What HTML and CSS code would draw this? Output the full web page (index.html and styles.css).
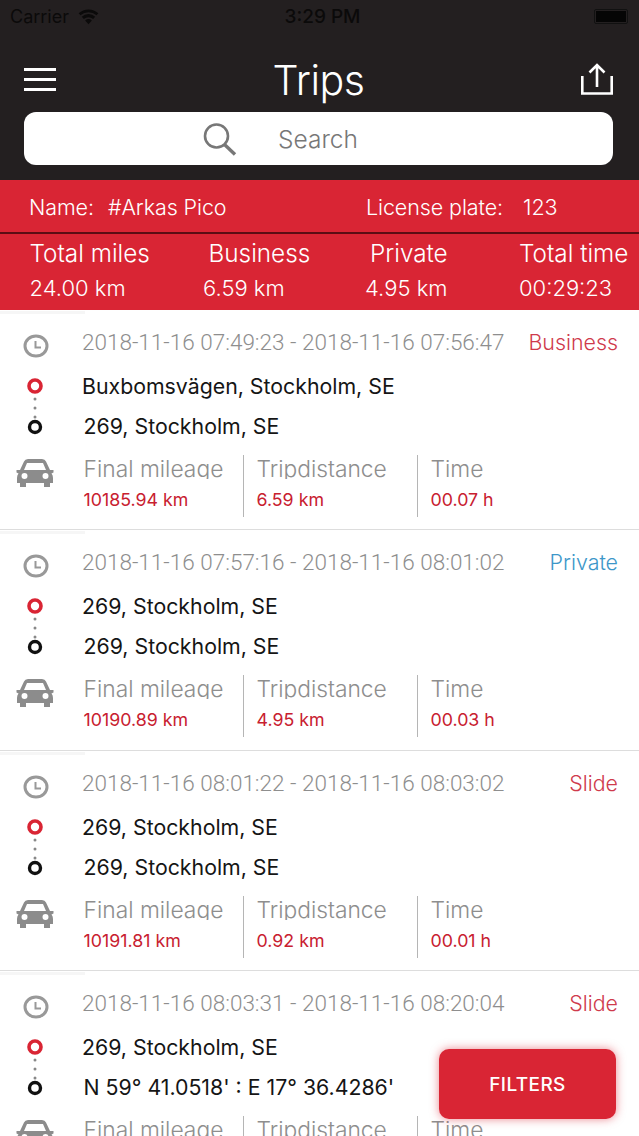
FILE: index.html
```html
<!DOCTYPE html>
<html lang="en">
<head>
  <meta charset="UTF-8" />
  <title>Trips</title>
  <link rel="stylesheet" href="styles.css">
</head>
<body>
  <header class="top">
    <div class="status-bar">
      <div class="carrier">
        Carrier
        <svg class="wifi" viewBox="0 0 20 15" width="21" height="16"><path d="M10 14.500 6.800 10.800A5 5 0 0 1 13.200 10.800ZM5.600 9.400 3.600 7.200A9.600 9.600 0 0 1 16.400 7.200L14.400 9.400A6.800 6.800 0 0 0 5.600 9.400ZM2.400 5.900 .6 3.900A14 14 0 0 1 19.400 3.900L17.600 5.900A11.400 11.400 0 0 0 2.400 5.900Z" fill="#0b0a0a"/></svg>
      </div>
      <div class="clock-text">3:29 PM</div>
      <div class="battery"><span></span></div>
    </div>
    <div class="nav-row">
      <svg class="menu-icon" viewBox="0 0 32 23" width="32" height="23"><path d="M0 1.500h32M0 11.500h32M0 21.500h32" stroke="#fff" stroke-width="3"/></svg>
      <h1>Trips</h1>
      <svg class="share-icon" viewBox="0 0 32 32" width="32" height="32"><path d="M1.300 13v17.500h29.400V13" fill="none" stroke="#fff" stroke-width="2.600"/><path d="M16 24V2M8.500 9.500 16 2l7.500 7.500" fill="none" stroke="#fff" stroke-width="2.600"/></svg>
    </div>
    <div class="search-box">
      <svg viewBox="0 0 36 34" width="36" height="34"><circle cx="14.500" cy="14" r="11.500" fill="none" stroke="#777" stroke-width="2.600"/><path d="M22.500 22.500 33 32.500" stroke="#777" stroke-width="3.400"/></svg>
      <span>Search</span>
    </div>
  </header>

  <section class="summary">
    <div class="vehicle-row">
      <div class="vehicle-name"><span>Name:</span><span>#Arkas Pico</span></div>
      <div class="vehicle-plate"><span>License plate:</span><span>123</span></div>
    </div>
    <div class="totals-row">
      <div class="total total-miles"><p>Total miles</p><p>24.00 km</p></div>
      <div class="total total-business"><p>Business</p><p>6.59 km</p></div>
      <div class="total total-private"><p>Private</p><p>4.95 km</p></div>
      <div class="total total-time"><p>Total time</p><p>00:29:23</p></div>
    </div>
  </section>

  <main class="trip-list">

    <div class="trip-card">
      <div class="icon-col">
        <svg class="clock-icon" viewBox="0 0 26 24" width="26" height="24"><ellipse cx="13" cy="12" rx="11" ry="10" fill="none" stroke="#999" stroke-width="3"/><path d="M12.500 7v6.500h5.500" fill="none" stroke="#999" stroke-width="2"/></svg>
        <svg class="route-icon" viewBox="0 0 18 62" width="18" height="62"><circle cx="9" cy="8" r="6" fill="none" stroke="#d92534" stroke-width="3.600"/><circle cx="9" cy="21" r="1.500" fill="#888"/><circle cx="9" cy="30" r="1.500" fill="#888"/><circle cx="9" cy="39" r="1.500" fill="#888"/><circle cx="9" cy="49" r="5.500" fill="none" stroke="#111" stroke-width="3.400"/></svg>
        <svg class="car-icon" viewBox="0 0 38 30" width="38" height="30"><path d="M4 12 8 3.500Q9 1 12 1H26Q29 1 30 3.500L34 12H37.500V14.500L35.500 15.500Q37 17 37 20V25H34V29H28V25H10V29H4V25H1V20Q1 17 2.500 15.500L.5 14.500V12ZM8 12H30L27 5H11ZM8.500 21a3 3 0 1 0 0-6a3 3 0 1 0 0 6ZM29.500 21a3 3 0 1 0 0-6a3 3 0 1 0 0 6Z" fill="#8c8c8c" fill-rule="evenodd"/></svg>
      </div>
      <div class="trip-body">
        <div class="date-row"><span class="dates">2018-11-16 07:49:23 - 2018-11-16 07:56:47</span><span class="tag tag-red">Business</span></div>
        <p class="address">Buxbomsvägen, Stockholm, SE</p>
        <p class="address address-to">269, Stockholm, SE</p>
        <div class="metrics">
          <div class="metric"><p class="metric-label">Final mileage</p><p class="metric-value">10185.94 km</p></div>
          <div class="metric"><p class="metric-label">Tripdistance</p><p class="metric-value">6.59 km</p></div>
          <div class="metric"><p class="metric-label">Time</p><p class="metric-value">00.07 h</p></div>
        </div>
      </div>
    </div>

    <div class="trip-card">
      <div class="icon-col">
        <svg class="clock-icon" viewBox="0 0 26 24" width="26" height="24"><ellipse cx="13" cy="12" rx="11" ry="10" fill="none" stroke="#999" stroke-width="3"/><path d="M12.500 7v6.500h5.500" fill="none" stroke="#999" stroke-width="2"/></svg>
        <svg class="route-icon" viewBox="0 0 18 62" width="18" height="62"><circle cx="9" cy="8" r="6" fill="none" stroke="#d92534" stroke-width="3.600"/><circle cx="9" cy="21" r="1.500" fill="#888"/><circle cx="9" cy="30" r="1.500" fill="#888"/><circle cx="9" cy="39" r="1.500" fill="#888"/><circle cx="9" cy="49" r="5.500" fill="none" stroke="#111" stroke-width="3.400"/></svg>
        <svg class="car-icon" viewBox="0 0 38 30" width="38" height="30"><path d="M4 12 8 3.500Q9 1 12 1H26Q29 1 30 3.500L34 12H37.500V14.500L35.500 15.500Q37 17 37 20V25H34V29H28V25H10V29H4V25H1V20Q1 17 2.500 15.500L.5 14.500V12ZM8 12H30L27 5H11ZM8.500 21a3 3 0 1 0 0-6a3 3 0 1 0 0 6ZM29.500 21a3 3 0 1 0 0-6a3 3 0 1 0 0 6Z" fill="#8c8c8c" fill-rule="evenodd"/></svg>
      </div>
      <div class="trip-body">
        <div class="date-row"><span class="dates">2018-11-16 07:57:16 - 2018-11-16 08:01:02</span><span class="tag tag-blue">Private</span></div>
        <p class="address">269, Stockholm, SE</p>
        <p class="address address-to">269, Stockholm, SE</p>
        <div class="metrics">
          <div class="metric"><p class="metric-label">Final mileage</p><p class="metric-value">10190.89 km</p></div>
          <div class="metric"><p class="metric-label">Tripdistance</p><p class="metric-value">4.95 km</p></div>
          <div class="metric"><p class="metric-label">Time</p><p class="metric-value">00.03 h</p></div>
        </div>
      </div>
    </div>

    <div class="trip-card">
      <div class="icon-col">
        <svg class="clock-icon" viewBox="0 0 26 24" width="26" height="24"><ellipse cx="13" cy="12" rx="11" ry="10" fill="none" stroke="#999" stroke-width="3"/><path d="M12.500 7v6.500h5.500" fill="none" stroke="#999" stroke-width="2"/></svg>
        <svg class="route-icon" viewBox="0 0 18 62" width="18" height="62"><circle cx="9" cy="8" r="6" fill="none" stroke="#d92534" stroke-width="3.600"/><circle cx="9" cy="21" r="1.500" fill="#888"/><circle cx="9" cy="30" r="1.500" fill="#888"/><circle cx="9" cy="39" r="1.500" fill="#888"/><circle cx="9" cy="49" r="5.500" fill="none" stroke="#111" stroke-width="3.400"/></svg>
        <svg class="car-icon" viewBox="0 0 38 30" width="38" height="30"><path d="M4 12 8 3.500Q9 1 12 1H26Q29 1 30 3.500L34 12H37.500V14.500L35.500 15.500Q37 17 37 20V25H34V29H28V25H10V29H4V25H1V20Q1 17 2.500 15.500L.5 14.500V12ZM8 12H30L27 5H11ZM8.500 21a3 3 0 1 0 0-6a3 3 0 1 0 0 6ZM29.500 21a3 3 0 1 0 0-6a3 3 0 1 0 0 6Z" fill="#8c8c8c" fill-rule="evenodd"/></svg>
      </div>
      <div class="trip-body">
        <div class="date-row"><span class="dates">2018-11-16 08:01:22 - 2018-11-16 08:03:02</span><span class="tag tag-red">Slide</span></div>
        <p class="address">269, Stockholm, SE</p>
        <p class="address address-to">269, Stockholm, SE</p>
        <div class="metrics">
          <div class="metric"><p class="metric-label">Final mileage</p><p class="metric-value">10191.81 km</p></div>
          <div class="metric"><p class="metric-label">Tripdistance</p><p class="metric-value">0.92 km</p></div>
          <div class="metric"><p class="metric-label">Time</p><p class="metric-value">00.01 h</p></div>
        </div>
      </div>
    </div>

    <div class="trip-card">
      <div class="icon-col">
        <svg class="clock-icon" viewBox="0 0 26 24" width="26" height="24"><ellipse cx="13" cy="12" rx="11" ry="10" fill="none" stroke="#999" stroke-width="3"/><path d="M12.500 7v6.500h5.500" fill="none" stroke="#999" stroke-width="2"/></svg>
        <svg class="route-icon" viewBox="0 0 18 62" width="18" height="62"><circle cx="9" cy="8" r="6" fill="none" stroke="#d92534" stroke-width="3.600"/><circle cx="9" cy="21" r="1.500" fill="#888"/><circle cx="9" cy="30" r="1.500" fill="#888"/><circle cx="9" cy="39" r="1.500" fill="#888"/><circle cx="9" cy="49" r="5.500" fill="none" stroke="#111" stroke-width="3.400"/></svg>
        <svg class="car-icon" viewBox="0 0 38 30" width="38" height="30"><path d="M4 12 8 3.500Q9 1 12 1H26Q29 1 30 3.500L34 12H37.500V14.500L35.500 15.500Q37 17 37 20V25H34V29H28V25H10V29H4V25H1V20Q1 17 2.500 15.500L.5 14.500V12ZM8 12H30L27 5H11ZM8.500 21a3 3 0 1 0 0-6a3 3 0 1 0 0 6ZM29.500 21a3 3 0 1 0 0-6a3 3 0 1 0 0 6Z" fill="#8c8c8c" fill-rule="evenodd"/></svg>
      </div>
      <div class="trip-body">
        <div class="date-row"><span class="dates">2018-11-16 08:03:31 - 2018-11-16 08:20:04</span><span class="tag tag-red">Slide</span></div>
        <p class="address">269, Stockholm, SE</p>
        <p class="address address-to">N 59° 41.0518' : E 17° 36.4286'</p>
        <div class="metrics">
          <div class="metric"><p class="metric-label">Final mileage</p></div>
          <div class="metric"><p class="metric-label">Tripdistance</p></div>
          <div class="metric"><p class="metric-label">Time</p></div>
        </div>
      </div>
    </div>

  </main>

  <button class="filters-btn">FILTERS</button>
</body>
</html>
```

FILE: styles.css
```css
html, body {
  margin: 0;
  padding: 0;
  height: 1136px;
  overflow: hidden;
}

body {
  position: relative;
  font-family: Inter, "Liberation Sans", sans-serif;
  background: #fff;
}

p {
  margin: 0;
}

.top {
  height: 180px;
  box-sizing: border-box;
  background: #231f20;
  padding: 0 26px 0 24px;
}

.status-bar {
  height: 33px;
  margin: 0 -26px 0 -14px;
  display: grid;
  grid-template-columns: 1fr auto 1fr;
  align-items: center;
  font-size: 18px;
  color: #0b0a0a;
}

.carrier {
  display: flex;
  align-items: center;
  gap: 9px;
}

.clock-text {
  font-size: 19px;
  font-weight: 500;
  margin-left: -4px;
}

.battery {
  justify-self: end;
  width: 34px;
  height: 15px;
  box-sizing: border-box;
  margin-right: 11px;
  border: 1px solid #111;
  border-radius: 2px;
  padding: 1px;
}

.battery span {
  display: block;
  height: 100%;
  background: #050505;
}

.nav-row {
  height: 79px;
  box-sizing: border-box;
  padding-top: 14px;
  display: flex;
  justify-content: space-between;
  align-items: center;
}

.nav-row h1 {
  margin: 0;
  font-size: 41px;
  font-weight: 300;
  letter-spacing: -0.5px;
  color: #fff;
}

.share-icon {
  margin-top: -2px;
}

.search-box {
  height: 53px;
  background: #fff;
  border-radius: 12px;
  display: flex;
  align-items: center;
  padding-left: 178px;
  gap: 40px;
  font-size: 24.500px;
  font-weight: 300;
  color: #777;
}

.summary {
  height: 130px;
  background: #d92534;
  color: #fff;
  font-weight: 300;
}

.vehicle-row {
  height: 54px;
  box-sizing: border-box;
  border-bottom: 2px solid #5c0d14;
  padding-top: 1px;
  display: flex;
  align-items: center;
  padding-left: 29px;
  font-size: 21.500px;
  letter-spacing: -0.1px;
}

.vehicle-name {
  width: 337px;
  display: flex;
  gap: 14px;
}

.vehicle-plate {
  display: flex;
  gap: 20px;
}

.totals-row {
  display: flex;
  padding-top: 3px;
}

.total p {
  font-size: 22px;
  line-height: 38px;
  white-space: nowrap;
}

.total p:first-child {
  font-size: 24.300px;
  line-height: 32px;
}

.total-miles {
  margin-left: 29.500px;
  width: 173.500px;
}

.total-business {
  width: 156px;
}

.total-business p:first-child {
  margin-left: 5.500px;
}

.total-private {
  width: 161px;
  padding-left: 6px;
  box-sizing: border-box;
}

.total-private p:first-child {
  margin-left: 5px;
}

.total-time {
  margin-left: -1px;
}

.trip-card {
  position: relative;
  height: 220.400px;
  box-sizing: border-box;
  display: flex;
  border-bottom: 1px solid #ddd;
}

.trip-card::before {
  content: "";
  position: absolute;
  left: 0;
  top: 1px;
  width: 85px;
  height: 3px;
  background: #f6f6f6;
}

.icon-col {
  width: 70px;
  flex: none;
  display: flex;
  flex-direction: column;
  align-items: center;
}

.clock-icon {
  margin-top: 24px;
  margin-left: 2px;
}

.route-icon {
  margin-top: 20px;
}

.car-icon {
  margin-top: 18px;
}

.trip-body {
  flex: 1;
  min-width: 0;
  padding: 18px 21px 0 12px;
}

.date-row {
  display: flex;
  justify-content: space-between;
  font-size: 21.400px;
  line-height: 28px;
  font-weight: 300;
}

.dates {
  color: #8e8e8e;
  font-family: Roboto, sans-serif;
  font-size: 22.500px;
  white-space: nowrap;
}

.tag-red {
  color: #cf3a4c;
}

.tag-blue {
  color: #3d97c9;
}

.address {
  margin-top: 12px;
  font-size: 21.300px;
  line-height: 28px;
  font-weight: 400;
  color: #151515;
}

.address:nth-of-type(1) {
  margin-top: 16px;
}

.address-to {
  margin-left: 1.500px;
}

.metrics {
  display: flex;
  margin-top: 15px;
  height: 62px;
}

.metric {
  box-sizing: border-box;
  padding-left: 12.500px;
  width: 174px;
  border-left: 1.500px solid #b5b5b5;
}

.metric:first-child {
  width: 161px;
  padding-left: 1.500px;
  border-left: none;
}

.metric-label {
  height: 24px;
  overflow: hidden;
  font-size: 22.800px;
  line-height: 28px;
  font-weight: 300;
  color: #8e8e8e;
}

.metric-value {
  margin-top: 10px;
  font-size: 17.800px;
  line-height: 22px;
  color: #c8202f;
}

.filters-btn {
  position: absolute;
  left: 439px;
  top: 1049px;
  width: 177px;
  height: 70px;
  border: none;
  border-radius: 10px;
  background: #d92534;
  color: #fff;
  font-family: inherit;
  font-size: 19px;
  font-weight: 500;
  letter-spacing: 0.4px;
  box-shadow: 0 0 10px rgba(217, 37, 52, 0.55);
}
```
